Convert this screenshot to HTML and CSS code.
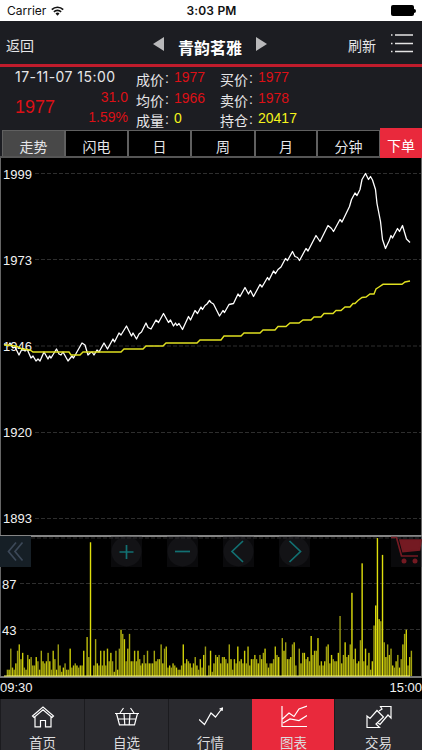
FILE: index.html
```html
<!doctype html>
<html lang="zh">
<head>
	<meta charset="UTF-8">
	<title>青韵茗雅</title>
	<link rel="stylesheet" href="styles.css">
</head>
<body>
	<div class="status">
		<span class="carrier">Carrier
			<svg width="13" height="10" viewBox="0 0 13 10"><g fill="none" stroke="#111" stroke-width="1.7"><path d="M.8 3.6a8.1 8.1 0 0 1 11.4 0"/><path d="M2.9 5.9a5.1 5.1 0 0 1 7.2 0"/></g><path d="M4.5 7.6a2.8 2.8 0 0 1 4 0l-2 2.1z" fill="#111"/></svg>
		</span>
		<span class="time">3:03 PM</span>
		<span class="battery"><i></i></span>
	</div>
	<div class="header">
		<a class="back">返回</a>
		<div class="title">
			<svg width="11" height="14" viewBox="0 0 11 14"><path d="M11 0v14L0 7z" fill="#b9b9bb"/></svg>
			<b>青韵茗雅</b>
			<svg width="11" height="14" viewBox="0 0 11 14"><path d="M0 0v14l11-7z" fill="#b9b9bb"/></svg>
		</div>
		<div class="tools">
			<a>刷新</a>
			<svg width="22" height="20" viewBox="0 0 22 20"><path d="M0 2h1.5M0 10.500h1.5M0 18.500h1.5M4 2h18M4 10.500h18M4 18.500h18" stroke="#e4e4e4" stroke-width="1.3"/></svg>
		</div>
	</div>
	<div class="info">
		<div class="now">
			<p class="date">17-11-07 15:00</p>
			<div class="price">
				<span class="big">1977</span>
				<div class="diff"><p>31.0</p><p>1.59%</p></div>
			</div>
		</div>
		<ul class="c1">
			<li><label>成价</label><s>:</s><em>1977</em></li>
			<li><label>均价</label><s>:</s><em>1966</em></li>
			<li><label>成量</label><s>:</s><em class="y">0</em></li>
		</ul>
		<ul class="c2">
			<li><label>买价</label><s>:</s><em>1977</em></li>
			<li><label>卖价</label><s>:</s><em>1978</em></li>
			<li><label>持仓</label><s>:</s><em class="y">20417</em></li>
		</ul>
	</div>
	<div class="tabs">
		<a class="active">走势</a>
		<a>闪电</a>
		<a>日</a>
		<a>周</a>
		<a>月</a>
		<a>分钟</a>
		<a class="order">下单</a>
	</div>
	<div class="chart">
		<svg width="422" height="541" viewBox="0 158 422 541">
			<path class="frame" d="M.5 158V678M421.5 158V678"/>
			<path class="grid" d="M35 173.5H421M35 259.5H421M35 346H421M35 432.5H421M35 518.5H421M20 583.5H421M20 629.5H421M1 538H421"/>
			<path class="split" d="M0 536H422"/>
			<path class="axis" d="M0 677H422"/>
			<g class="label">
				<text x="3" y="178.5">1999</text>
				<text x="3" y="264.5">1973</text>
				<text x="3" y="350.5">1946</text>
				<text x="3" y="437">1920</text>
				<text x="3" y="523">1893</text>
				<text x="2" y="588.5">87</text>
				<text x="2" y="634.5">43</text>
				<text x="0" y="692">09:30</text>
				<text x="422" y="692" text-anchor="end">15:00</text>
			</g>
			<path class="line" d="M4 344L8 346 10 343 13 348 15 347 19 355 22 349 25 351 27 349 31 358 33 356 36 361 38 359 40 361 44 352 48 359 49.5 356 51 358 56.5 349 59 354 61 355 63 352 68 361 72 356 73.5 358 82 343 85 345 88 355 90 353 92 352 94 355 97 350 99 352 104 343 107.500 349 113 339 114.500 342 119 333 121 335 126.500 326 131.500 336 133 333 136.500 339 139 334 141.500 332 146 323 148 327.500 151 329 156 320 158.500 322.500 163.500 313.500 168.500 322.500 170.500 320 173.500 326 175.500 323 177 325.500 179 323.500 182.500 329.500 188.500 316.500 190.500 320 195 310.500 197.500 313.500 201 307 202.500 309.500 205 305.500 207 304 209.500 300.500 211 302.500 213.500 304 219.500 316 223 310.500 224.500 312.500 229 304.500 233.500 303.500 238 294 240 296.500 245 287.500 248.500 294 250.500 290.500 253.500 296.500 260 284.500 262 287 267.500 277.500 269 280 273.500 271 275.500 273.500 278 269.500 281 267 285.500 258.500 287.500 260.500 292.500 251.500 295 256.500 297.500 257.500 299.500 260.500 306 248.500 308 251 316 235.500 320 241.500 328 225.500 331.500 228.500 333.500 231.500 340 219.500 342 222 349.500 206.500 351.500 199.500 355 193 357 195.500 360 189.500 362 179.500 365.500 173.500 368.500 179.500 370.500 176.500 372.500 180 375.500 189.500 377 203.500 380.500 221.500 382.500 239.500 385.500 248.500 389 241 391 235.500 392.500 238 397.500 228.500 399.500 231.500 402.500 225.500 406.500 239 410 242.500"/>
			<path class="avg" d="M4 345L16 346 22 349 30 350 33 352H69L71 355H80L83 352H121L124 349H143L146 346H163L166 343H197L200 340H221L224 336H241L244 333H260L263 330H275L278 326.5H286L290 323H299L303 320H311L314 317H321L324 313.5H333L336 310.5H341L345 307H350L353 303.5H355L358 300.5 362 297.5 366 297 370 294H374L376 289 379 287 383 284.3H402L405 282 410 281"/>
			<g id="vol"></g>
			<path class="base" d="M4 676H410"/>
		</svg>
		<a class="btn fold"><svg width="31" height="31" viewBox="0 0 31 31"><path d="M16 6.500L8.500 15.500 16 24.500M22.500 6.500L15 15.500l7.500 9"/></svg></a>
		<a class="btn plus"><svg width="31" height="31" viewBox="0 0 31 31"><circle cx="15.500" cy="15.500" r="15"/><path d="M8.500 16h14M15.500 9v14"/></svg></a>
		<a class="btn minus"><svg width="31" height="31" viewBox="0 0 31 31"><circle cx="15.500" cy="15.500" r="15"/><path d="M8 15.500h15"/></svg></a>
		<a class="btn left"><svg width="31" height="31" viewBox="0 0 31 31"><circle cx="15.500" cy="15.500" r="15"/><path d="M20 5L9 15.500l11 10.500"/></svg></a>
		<a class="btn right"><svg width="31" height="31" viewBox="0 0 31 31"><circle cx="15.500" cy="15.500" r="15"/><path d="M10.500 5L21.500 15.500l-11 10.500"/></svg></a>
		<a class="btn cart"><svg width="31" height="31" viewBox="0 0 31 31"><path d="M0 1.500h5.500L10.500 20H27"/><g><path class="w" d="M9 4h21l-1.500 10L12 15.500z"/><circle class="w" cx="13" cy="25" r="2.500"/><circle class="w" cx="24" cy="25" r="2.500"/></g></svg></a>
	</div>
	<div class="nav">
		<a><svg width="24" height="24" viewBox="0 0 24 24"><path d="M1.500 11L12 2l10.500 9-1.500 1.500L12 4.800 3 12.500zM4 12v9.800h5.500V15.500h5V21.800H20V12"/></svg>首页</a>
		<a><svg width="24" height="24" viewBox="0 0 24 24"><path d="M0 8.500h24M1.500 8.500L4.500 19.800h15l3-11.300M3 14h18M9 8.500l.8 11.300M15 8.500l-.8 11.300M5 8l3.500-5M19 8l-3.500-5"/></svg>自选</a>
		<a><svg width="24" height="24" viewBox="0 0 24 24"><path d="M0 14.500l5.500 5L12 8l4.500 4L23 3.500M20.500 4L23.500 3l-.5 3"/></svg>行情</a>
		<a class="active"><svg width="26" height="24" viewBox="0 0 26 24"><path d="M1 1v20.500h25M1.500 14L8 8l5 3.500L18 4l8-3M2 18l7-4 9 1.500 8-5"/></svg>图表</a>
		<a><svg width="26" height="24" viewBox="0 0 26 24"><path d="M1 22.500V11l3 2.500 7-8 6.500 6.500L10 19l3.500 3.500zM13 6l3-2-1.500-2.500H25v11.500l-3-3L14 19.500l-2.500-2"/></svg>交易</a>
	</div>
	<script src="script.js"></script>
</body>
</html>
```
FILE: styles.css
```css
*{margin: 0;padding: 0;list-style: none;box-sizing: border-box;}
body{width: 422px;height: 750px;overflow: hidden;background: #000;color: #e6e6e8;font: 14px/20px "Liberation Sans","Noto Sans CJK SC",sans-serif;}
svg{display: block;fill: none;}
em,i{font-style: normal;}

.status{height: 21px;background: #fff;color: #111;display: flex;align-items: center;justify-content: space-between;padding: 0 6px 0 7px;font: 12px/20px Inter,sans-serif;}
.carrier{display: flex;align-items: center;gap: 5px;width: 150px;}
.time{font-weight: 600;font-size: 12px;letter-spacing: .2px;}
.battery{width: 150px;display: flex;justify-content: flex-end;align-items: center;}
.battery i{width: 23px;height: 11px;background: #000;border-radius: 2px;}
.battery:after{content: "";width: 2px;height: 4px;background: #000;border-radius: 0 2px 2px 0;}

.header{height: 46px;background: #1c1d22;border-bottom: 3px solid #c01c2c;display: flex;justify-content: space-between;padding: 0 9px 0 6px;}
.back{width: 110px;padding-top: 15px;}
.title{display: flex;gap: 14px;padding: 16px 0 0 1px;}
.title b{font-size: 16px;line-height: 23px;color: #fff;}
.tools{width: 110px;display: flex;justify-content: flex-end;gap: 15px;padding-top: 15px;}
.tools svg{margin-top: -3px;}

.info{height: 61px;background: #1c1d22;display: flex;padding-left: 15px;}
.now{width: 121px;padding-right: 8px;}
.date{font: 14px/20px Inter,sans-serif;letter-spacing: .45px;white-space: nowrap;}
.price{display: flex;justify-content: space-between;color: #dc1016;}
.big{font-size: 18px;line-height: 40px;}
.diff{text-align: right;}
.info ul{width: 84px;}
.info .c2{width: 110px;}
.info li{display: flex;height: 20.500px;}
.info label{width: 28px;line-height: 26px;}
.info s{width: 10px;padding-left: 1px;text-decoration: none;line-height: 22px;}
.info em{color: #dc1016;line-height: 21px;}
.info .y{color: #f4f41c;}

.tabs{height: 30px;background: #1c1d22;border-bottom: 2px solid #555;display: grid;grid-template-columns: 65px 63px 63px 64px 62px 63px 42px;}
.tabs a{margin-top: 2px;border: 1px solid #606060;border-bottom: 0;background: #000;text-align: center;line-height: 33px;height: 26px;overflow: hidden;}
.tabs .active{background: #484848;margin-left: 2px;}
.tabs .order{margin: 0;height: 30px;border: 0;background: #e9293c;color: #fff;line-height: 36px;}

.chart{position: relative;height: 541px;overflow: hidden;}
.frame{stroke: #666;}
.grid{stroke: #2e2e2e;stroke-dasharray: 4 2;}
.split{stroke: #858585;stroke-width: 2;}
.axis{stroke: #777;stroke-width: 2;}
.base{stroke: #ffff70;}
.label{fill: #f2f2f2;font-size: 13px;}
.avg{stroke: #e0e020;stroke-width: 1.400;}
.line{stroke: #fff;stroke-width: 1.300;stroke-linejoin: round;}
.btn{position: absolute;top: 378px;width: 31px;height: 31px;background: rgba(40,40,48,.25);}
.btn path{stroke: #127072;stroke-width: 1.700;}
.btn circle{fill: rgba(36,38,42,.35);}
.fold{left: 0;background: #161f26;}
.btn.fold path{stroke: #3c4858;}
.plus{left: 111px;}
.minus{left: 167px;}
.left{left: 223px;}
.right{left: 279px;}
.cart{left: 391px;}
.btn.cart path{stroke: #741a22;}
.btn.cart .w{fill: #741a22;}

.nav{height: 51px;background: #2a2a2f;display: grid;grid-template-columns: 84px 84px 84px 82px 88px;overflow: hidden;}
.nav a{display: flex;flex-direction: column;align-items: center;padding-top: 6px;font-size: 13.500px;line-height: 20px;gap: 5px;border-left: 1px solid #1b1b1f;color: #dcdcde;}
.nav svg{stroke: #fff;stroke-width: 1.200;flex: none;}
.nav .active{background: #e9293c;border-color: #e9293c;}
```
FILE: script.js
```js
// volume per minute, [first x, last x, values]
var parts = [
	[7.4, 139.7, [6,6,26,8,6,12,24,30,16,22,8,6,20,16,18,10,10,18,14,6,24,14,12,14,22,14,6,24,16,6,30,10,4,8,12,6,6,26,8,10,12,10,8,10,10,24,0,37,18,127,0,10,35,12,10,24,10,24,10,26,14,22,14,4,24,6,26,44,40,35,14,26,40,14,14,24,14,24,16]],
	[140.7, 278.7, [10,12,20,12,24,12,12,12,24,14,16,16,30,12,26,28,8,10,8,12,10,8,6,6,10,30,12,16,14,12,8,12,18,10,6,16,8,20,28,0,10,24,4,12,20,18,20,12,18,18,16,12,30,16,6,16,12,28,14,16,12,24,12,28,10,16,16,20,16,12,20,16,22,26,12,8,12,12,16,28,20,18]],
	[282.3, 411.4, [36,24,32,16,16,18,30,32,10,0,26,12,22,22,16,18,14,38,20,24,24,36,10,14,10,14,28,30,12,20,16,14,14,22,57,12,20,32,18,20,30,79,16,26,12,14,34,107,14,26,10,22,6,14,48,67,131,54,52,115,32,18,30,20,26,10,8,14,20,8,16,30,40,44,10,18,24]]
];
var colors = ['#a5a510', '#d0d008', '#9a9a14', '#c0c00c'];
var html = '';
for(var i=0;i<parts.length;i++)
{
	var list = parts[i][2];
	var step = (parts[i][1]-parts[i][0])/(list.length-1);
	for(var j=0;j<list.length;j++)
	{
		var h = list[j]*1.053;
		var x = parts[i][0]+j*step-0.7;
		html += '<rect x="'+x.toFixed(2)+'" y="'+(676-h).toFixed(2)+'" width="1.4" height="'+h.toFixed(2)+'" fill="'+(list[j]>60?'#dede0c':colors[j%4])+'"/>';
	}
}
document.getElementById('vol').innerHTML = html;
```
